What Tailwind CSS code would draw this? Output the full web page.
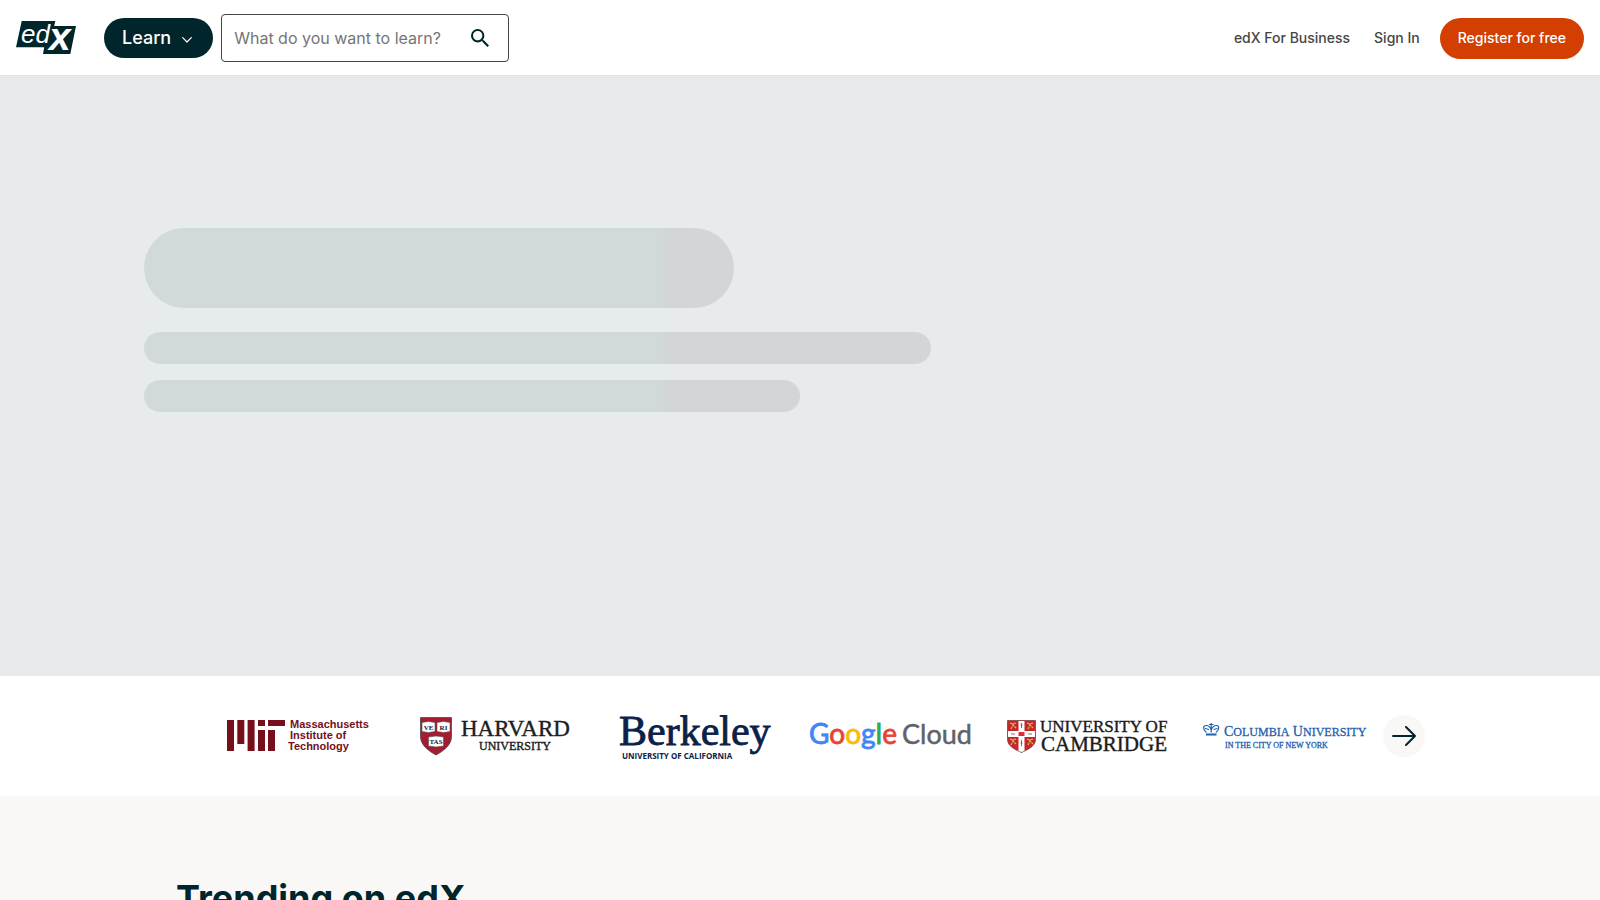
<!DOCTYPE html>
<html lang="en">
<head>
<meta charset="utf-8">
<meta name="viewport" content="width=device-width, initial-scale=1">
<title>edX</title>
<script src="https://cdn.jsdelivr.net/npm/@tailwindcss/browser@4"></script>
</head>
<body class="bg-[#f9f8f7] font-['Inter',sans-serif] text-[#00262b]">
<header class="flex h-[76px] items-center border-b border-[#e1e4e6] bg-white px-4 pt-px">
  <a href="#" aria-label="edX home" class="mr-7 shrink-0">
    <svg width="60" height="34" viewBox="0 0 60 34" class="block overflow-visible">
      <path fill="#00262b" d="M5.7 0H39.3L38.2 5H60L54.3 33H27L28.2 26.3H0Z"/>
      <text x="5" y="22" font-family="Liberation Sans" font-style="italic" font-size="26" fill="#fff">ed</text>
      <text x="33" y="29" font-family="Liberation Sans" font-style="italic" font-weight="700" font-size="39" fill="#fff">x</text>
    </svg>
  </a>
  <button type="button" class="mr-2 flex h-10 shrink-0 items-center gap-[11px] rounded-full bg-[#00262b] pr-[21px] pl-[18px] text-lg font-medium text-white">
    Learn
    <svg width="10" height="6" viewBox="0 0 10 6" fill="none" stroke="#fff" stroke-width="1.2" stroke-linecap="round" stroke-linejoin="round" class="mt-1"><path d="M.7.7 5 5 9.3.7"/></svg>
  </button>
  <form role="search" class="flex h-12 w-72 items-center rounded border border-[#454545] pr-[19px] pl-3" onsubmit="return false">
    <input type="search" aria-label="What do you want to learn?" placeholder="What do you want to learn?" class="min-w-0 flex-1 text-base outline-none placeholder:text-[#757575]">
    <button type="submit" aria-label="Search">
      <svg width="18" height="18" viewBox="3 3 17.49 17.49" fill="#00262b" class="block"><path d="M15.5 14h-.79l-.28-.27A6.471 6.471 0 0 0 16 9.5 6.5 6.5 0 1 0 9.5 16c1.61 0 3.09-.59 4.23-1.57l.27.28v.79l5 4.99L20.49 19l-4.99-5zm-6 0C7.01 14 5 11.99 5 9.5S7.01 5 9.5 5 14 7.01 14 9.5 11.99 14 9.5 14z"/></svg>
    </button>
  </form>
  <nav class="ml-auto flex items-center text-sm font-medium text-[#454545]">
    <a href="#" class="mr-6">edX For Business</a>
    <a href="#" class="mr-5">Sign In</a>
    <a href="#" class="flex h-[41px] items-center rounded-full bg-[#d23f00] px-[18px] text-white">Register for free</a>
  </nav>
</header>
<main>
  <section aria-label="Loading" class="h-[600px] bg-[#e7ebeb] px-[9%] pt-[152px]">
    <div class="h-20 w-[45%] rounded-full bg-linear-to-r from-[#d1d9da] from-[512px] to-[#d2d6d8] to-[520px]"></div>
    <div class="mt-6 h-8 w-3/5 rounded-full bg-linear-to-r from-[#d1d9da] from-[512px] to-[#d2d6d8] to-[520px]"></div>
    <div class="mt-4 h-8 w-1/2 rounded-full bg-linear-to-r from-[#d1d9da] from-[512px] to-[#d2d6d8] to-[520px]"></div>
  </section>
  <section aria-label="Partners" class="bg-white">
    <div class="mx-auto flex h-[120px] max-w-[1250px] items-center pl-6">
      <ul class="grid flex-1 grid-cols-6 items-center justify-items-center">
        <li>
          <svg width="142" height="50" viewBox="0 0 142 50" role="img" aria-label="Massachusetts Institute of Technology" class="overflow-visible">
            <path fill="#750f1c" d="M0 9h7v31H0zM10.300 9h7v24h-7zM20.600 9h7v31h-7zM31 9h7v6h-7zM31 19h7v21h-7zM41 19h7v21h-7zM41 9h17v6H41z"/>
            <g font-family="Liberation Sans" font-weight="700" font-size="11" fill="#750f1c"><text x="63" y="17">Massachusetts</text><text x="63" y="28">Institute of</text><text x="61" y="39">Technology</text></g>
          </svg>
        </li>
        <li>
          <svg width="150" height="50" viewBox="0 0 150 50" role="img" aria-label="Harvard University" class="overflow-visible">
            <path fill="#a51c30" stroke="#53444a" stroke-width=".8" d="M.5 6.500h31v19c0 8-7 14-15.500 18.500C7.500 39.500.5 33.500.5 25.500z"/>
            <g fill="#fff" stroke="#555" stroke-width=".6"><path d="M2 11.500l6.500-1 6.500 1v9l-6.500 1-6.500-1zM17 11.500l6.500-1 6.500 1v9l-6.500 1-6.500-1zM8.500 26l7.500-1 7.500 1v9l-7.500 1-7.500-1z"/></g>
            <g font-family="Liberation Serif" font-weight="700" font-size="7" fill="#222" text-anchor="middle"><text x="8.500" y="18.500">VE</text><text x="23.500" y="18.500">RI</text><text x="16" y="33">TAS</text></g>
            <g font-family="Liberation Serif" fill="#1e1e1e" stroke="#1e1e1e" stroke-width=".4"><text x="41" y="25" font-size="23">HARVARD</text><text x="59" y="39" font-size="12">UNIVERSITY</text></g>
          </svg>
        </li>
        <li>
          <svg width="146" height="50" viewBox="0 0 146 50" role="img" aria-label="Berkeley University of California" class="overflow-visible">
            <text x="0" y="34" font-family="Liberation Serif" font-size="42" fill="#0b2148" stroke="#0b2148" stroke-width=".8">Berkeley</text>
            <text x="3" y="48" font-family="Open Sans" font-weight="700" font-size="8" fill="#0b2148">UNIVERSITY OF CALIFORNIA</text>
          </svg>
        </li>
        <li>
          <svg width="160" height="50" viewBox="0 0 160 50" role="img" aria-label="Google Cloud" class="overflow-visible">
            <text x="-1" y="33" font-family="Lato" font-size="28" stroke-width=".8"><tspan fill="#4285f4" stroke="#4285f4">G</tspan><tspan fill="#ea4335" stroke="#ea4335">o</tspan><tspan fill="#fbbc04" stroke="#fbbc04">o</tspan><tspan fill="#4285f4" stroke="#4285f4">g</tspan><tspan fill="#34a853" stroke="#34a853">l</tspan><tspan fill="#ea4335" stroke="#ea4335">e</tspan></text>
            <text x="92" y="33" font-family="Lato" font-size="27" fill="#5f6368" stroke="#5f6368" stroke-width=".5">Cloud</text>
          </svg>
        </li>
        <li>
          <svg width="160" height="50" viewBox="0 0 160 50" role="img" aria-label="University of Cambridge" class="overflow-visible">
            <path fill="#c8262f" stroke="#6b3a38" stroke-width=".7" d="M.5 9.500h28v19c0 6-6 9.500-14 13-8-3.500-14-7-14-13z"/>
            <path fill="#fff" d="M11.500 10h6v10h10.500v6H17.500v14l-3 1-3-1V26H1v-6h10.500z"/>
            <path fill="#d6303a" d="M11.500 21h6v4h-6z"/>
            <g fill="none" stroke="#e9b335" stroke-width="1.300"><path d="M3 12l3 1 3-1M4 18l2-4 3 3M20 12l3 1 3-1M21 18l2-4 3 3M3 28l3 1 3-1M4 34l2-4 3 3M20 28l3 1 3-1M21 34l2-4 3 3"/></g>
            <g fill="none" stroke="#6e4a35" stroke-width=".8"><path d="M3 14l3 2 3-2M20 14l3 2 3-2M3 30l3 2 3-2M20 30l3 2 3-2M13.500 14h2M14.500 12v5M13.500 32h2M14.500 29v6M4 23h4M21 23h4"/></g>
            <g font-family="Liberation Serif" fill="#1c1c1c" stroke="#1c1c1c" stroke-width=".4"><text x="33" y="21" font-size="17">UNIVERSITY OF</text><text x="34" y="40" font-size="21">CAMBRIDGE</text></g>
          </svg>
        </li>
        <li>
          <svg width="163" height="50" viewBox="0 0 163 50" role="img" aria-label="Columbia University in the City of New York" class="overflow-visible">
            <g fill="none" stroke="#1f5fae" stroke-width="1.200"><path d="M3.500 21.500C-1 18 .5 14.500 3 14.500s4 1 5.200 4.500C9.500 15.500 11 14.500 13.400 14.500s4 3.500-.5 7M8.200 12v9.500M6 13.500h4.500M2 17.500l4 1M14.500 17.500l-4 1"/><path stroke-width="2" d="M3 23.500h10.500"/></g>
            <g font-family="Liberation Serif" fill="#1f5fae" stroke="#1f5fae" stroke-width=".3"><text x="21" y="25" font-size="14">C<tspan font-size="12">OLUMBIA</tspan> U<tspan font-size="12">NIVERSITY</tspan></text><text x="22" y="37" font-size="8">IN THE CITY OF NEW YORK</text></g>
          </svg>
        </li>
      </ul>
      <button type="button" aria-label="Next partners" class="grid size-[42px] shrink-0 place-items-center rounded-full bg-[#f9f8f7]">
        <svg width="24" height="20" viewBox="0 0 24 20" fill="none" stroke="#00262b" stroke-width="2"><path stroke-linecap="round" stroke-linejoin="round" d="M1 10h22M14 1l9 9-9 9"/></svg>
      </button>
    </div>
  </section>
  <section class="mx-auto max-w-[1248px] py-20">
    <h2 class="text-4xl leading-[44px] font-bold">Trending on edX</h2>
  </section>
</main>
</body>
</html>
